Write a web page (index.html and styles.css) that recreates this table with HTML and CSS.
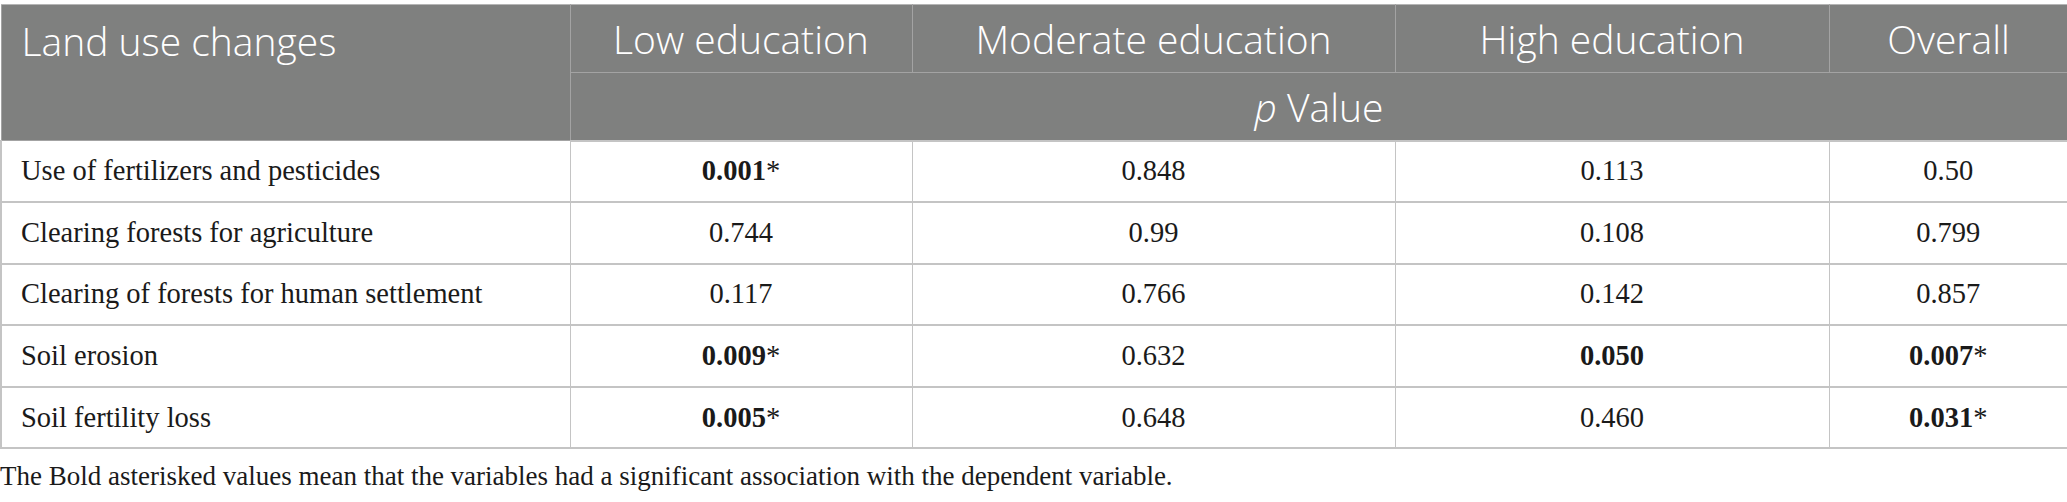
FILE: index.html
```html
<html>
<head>
	<title>Land use changes by education</title>
	<link rel="stylesheet" href="styles.css">
</head>
<body>
	<div class="wrap">
		<table class="results">
			<colgroup>
				<col class="c-label">
				<col class="c-low">
				<col class="c-mod">
				<col class="c-high">
				<col class="c-all">
			</colgroup>
			<thead>
				<tr class="head-top">
					<th rowspan="2" class="first">Land use changes</th>
					<th>Low education</th>
					<th>Moderate education</th>
					<th>High education</th>
					<th>Overall</th>
				</tr>
				<tr class="head-sub">
					<th colspan="4"><i>p</i> Value</th>
				</tr>
			</thead>
			<tbody>
				<tr>
					<td class="first">Use of fertilizers and pesticides</td>
					<td><b>0.001</b>*</td>
					<td>0.848</td>
					<td>0.113</td>
					<td>0.50</td>
				</tr>
				<tr>
					<td class="first">Clearing forests for agriculture</td>
					<td>0.744</td>
					<td>0.99</td>
					<td>0.108</td>
					<td>0.799</td>
				</tr>
				<tr>
					<td class="first">Clearing of forests for human settlement</td>
					<td>0.117</td>
					<td>0.766</td>
					<td>0.142</td>
					<td>0.857</td>
				</tr>
				<tr>
					<td class="first">Soil erosion</td>
					<td><b>0.009</b>*</td>
					<td>0.632</td>
					<td><b>0.050</b></td>
					<td><b>0.007</b>*</td>
				</tr>
				<tr>
					<td class="first">Soil fertility loss</td>
					<td><b>0.005</b>*</td>
					<td>0.648</td>
					<td>0.460</td>
					<td><b>0.031</b>*</td>
				</tr>
			</tbody>
		</table>
		<p class="note">The Bold asterisked values mean that the variables had a significant association with the dependent variable.</p>
	</div>
</body>
</html>
```

FILE: styles.css
```css
body {
	margin: 0;
	background-color: #fff;
	font-family: "Liberation Serif", serif;
	color: #1a1a1a;
}
.wrap {
	padding-top: 4px;
}
.results {
	width: 2067px;
	border-collapse: collapse;
	table-layout: fixed;
}
.c-label { width: 569px; }
.c-low { width: 342px; }
.c-mod { width: 483px; }
.c-high { width: 434px; }
.c-all { width: 239px; }

.results th {
	background-color: #7f807f;
	color: #fff;
	font-family: "Open Sans", sans-serif;
	font-weight: 300;
	font-size: 39px;
	text-align: center;
	border: 1px solid #a3a3a3;
	padding: 0;
}
.head-top th {
	height: 68px;
	border-top-color: #b5b5b5;
}
.head-sub th {
	height: 68px;
	border-bottom: 2px solid #c4c4c4;
}
.results th.first {
	text-align: left;
	vertical-align: top;
	padding: 9px 0 0 20px;
}
.results td {
	height: 61.6px;
	padding: 0;
	font-size: 28.5px;
	text-align: center;
	border-left: 1px solid #c4c4c4;
	border-right: 1px solid #c4c4c4;
	border-bottom: 2px solid #c4c4c4;
}
.results td.first {
	text-align: left;
	padding-left: 19px;
	border-left: 2px solid #c4c4c4;
}
.results td:last-child {
	border-right: 2px solid #c4c4c4;
}
.note {
	margin: 12px 0 0 0;
	font-size: 27px;
}
```
